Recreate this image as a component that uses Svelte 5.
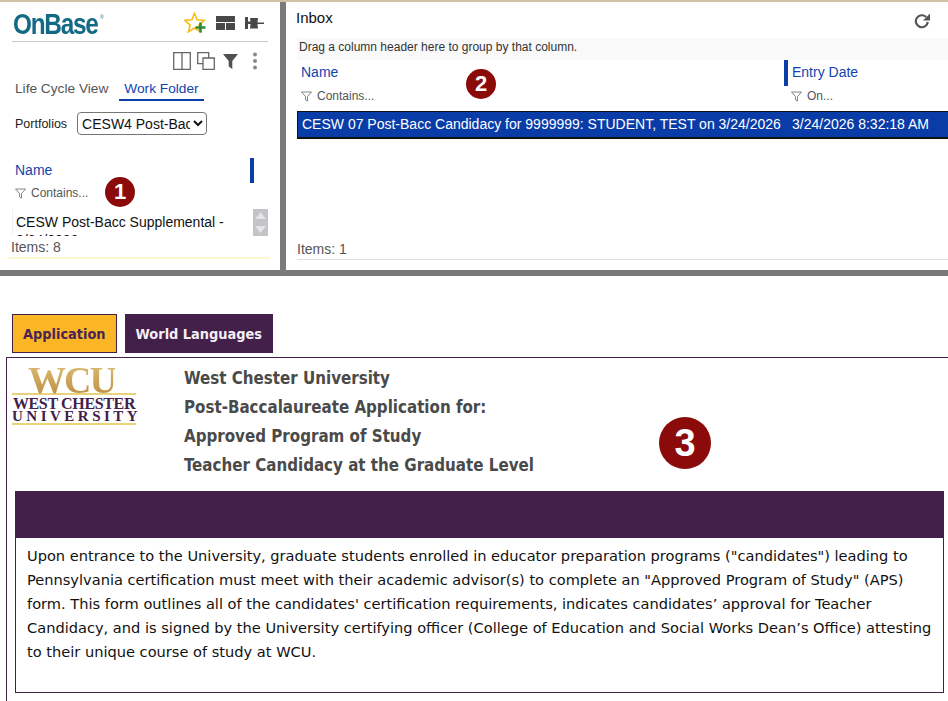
<script>
	const bodyLines = `Upon entrance to the University, graduate students enrolled in educator preparation programs ("candidates") leading to Pennsylvania certification must meet with their academic advisor(s) to complete an "Approved Program of Study" (APS) form. This form outlines all of the candidates' certification requirements, indicates candidates’ approval for Teacher Candidacy, and is signed by the University certifying officer (College of Education and Social Works Dean’s Office) attesting to their unique course of study at WCU.`;
</script>

<div class="page">
	<div class="top">
		<div class="left">
			<div class="brand">
				<span class="logo">OnBase<sup>®</sup></span>
				<div class="brand-icons">
					<svg width="22" height="21" viewBox="0 0 22 21">
						<path d="M10.500 1.500l2.700 6.300 7 .6-5.300 4.600 1.600 6.700-6-3.600-6 3.600 1.600-6.700L.8 8.400l7-.6z" fill="#fff" stroke="#f7bd1b" stroke-width="1.700"/>
						<path d="M16.500 10.500v10M11.500 15.500h10" stroke="#2c8a3c" stroke-width="2.600"/>
					</svg>
					<svg width="19" height="14" viewBox="0 0 19 14"><path d="M0 0h19v6H0zM0 7h9v7H0zM10 7h9v7h-9z" fill="#484848"/></svg>
					<svg width="19" height="12" viewBox="0 0 19 12"><path d="M0 0h3v4.500h2.500L5 1h8l-.5 4.500H19v1.500h-6.500l.5 4.500H5l.5-4.500H3V12H0z" fill="#484848"/></svg>
				</div>
			</div>
			<div class="tools">
				<svg width="18" height="18" viewBox="0 0 18 18"><path d="M.7.700h16.600v16.600H.700zM9 .700v16.600" fill="none" stroke="#666" stroke-width="1.300"/></svg>
				<svg width="18" height="18" viewBox="0 0 18 18"><path d="M.7.700h11v11H.700z" fill="#fff" stroke="#666" stroke-width="1.300"/><path d="M6 6h11.300v11.300H6z" fill="#fff" stroke="#666" stroke-width="1.300"/></svg>
				<svg class="funnel" width="15" height="15" viewBox="0 0 15 15"><path d="M0 0h15L9.300 7v8l-3.600-2.500V7z" fill="#505050"/></svg>
				<svg class="dots" width="6" height="18" viewBox="0 0 6 18"><circle cx="3" cy="2.500" r="2" fill="#888"/><circle cx="3" cy="9" r="2" fill="#888"/><circle cx="3" cy="15.500" r="2" fill="#888"/></svg>
			</div>
			<div class="tabs">
				<span class="tab">Life Cycle View</span>
				<span class="tab active">Work Folder</span>
			</div>
			<div class="portfolios">
				<span>Portfolios</span>
				<select><option>CESW4 Post-Bac</option></select>
			</div>
			<div class="col-head">
				<span>Name</span>
				<i class="grip"></i>
			</div>
			<div class="filter">
				<svg width="11" height="11" viewBox="0 0 11 11"><path d="M.5 1h10L6.500 5.500V10l-2-1.200V5.500z" fill="none" stroke="#666" stroke-width=".8"/></svg>
				<span>Contains...</span>
			</div>
			<div class="list">
				<div class="list-text">CESW Post-Bacc Supplemental - 3/24/2026</div>
				<div class="scroll">
					<svg width="15" height="13" viewBox="0 0 15 13"><path d="M7.500 3l5.500 7H2z" fill="#e4e4e4"/></svg>
					<svg width="15" height="13" viewBox="0 0 15 13"><path d="M7.500 10L2 3h11z" fill="#e4e4e4"/></svg>
				</div>
			</div>
			<div class="items left-items">Items: 8</div>
		</div>
		<div class="splitter"></div>
		<div class="right">
			<div class="inbox-title">
				<span>Inbox</span>
				<svg width="16" height="16" viewBox="0 0 16 16"><path d="M13.800 9a6 6 0 1 1-1.700-5" fill="none" stroke="#555" stroke-width="2.200"/><path d="M16 .5V7.500H9z" fill="#555"/></svg>
			</div>
			<div class="group">Drag a column header here to group by that column.</div>
			<div class="grid-head">
				<div class="col-name">
					<div class="head-label">Name</div>
					<div class="filter">
						<svg width="11" height="11" viewBox="0 0 11 11"><path d="M.5 1h10L6.500 5.500V10l-2-1.200V5.500z" fill="none" stroke="#666" stroke-width=".8"/></svg>
						<span>Contains...</span>
					</div>
				</div>
				<div class="col-date">
					<div class="head-label date">Entry Date</div>
					<div class="filter">
						<svg width="11" height="11" viewBox="0 0 11 11"><path d="M.5 1h10L6.500 5.500V10l-2-1.200V5.500z" fill="none" stroke="#666" stroke-width=".8"/></svg>
						<span>On...</span>
					</div>
				</div>
			</div>
			<div class="row">
				<span class="row-name">CESW 07 Post-Bacc Candidacy for 9999999: STUDENT, TEST on 3/24/2026</span>
				<span>3/24/2026 8:32:18 AM</span>
			</div>
			<div class="spacer"></div>
			<div class="items right-items">Items: 1</div>
		</div>
	</div>
	<div class="bar"></div>

	<div class="form-tabs">
		<button class="ftab on">Application</button>
		<button class="ftab">World Languages</button>
	</div>
	<div class="form">
		<div class="form-head">
			<div class="wcu">
				<div class="wcu-mark"><span>WCU</span></div>
				<div class="wcu-west">WEST CHESTER</div>
				<div class="wcu-uni">UNIVERSITY</div>
			</div>
			<div class="titles">
				<div>West Chester University</div>
				<div>Post-Baccalaureate Application for:</div>
				<div>Approved Program of Study</div>
				<div>Teacher Candidacy at the Graduate Level</div>
			</div>
		</div>
		<div class="section">
			<div class="section-bar"></div>
			<p>{bodyLines}</p>
		</div>
	</div>

	<span class="badge b1">1</span>
	<span class="badge b2">2</span>
	<span class="badge b3">3</span>
</div>

<style>
	:global(body) {
		margin: 0;
		background: #fff;
		font-family: "Liberation Sans", Arial, sans-serif;
	}

	.page {
		position: relative;
		width: 948px;
		height: 701px;
		overflow: hidden;
	}

	.top {
		display: flex;
		height: 268px;
		border-top: 2px solid #d3bfa5;
	}

	.left {
		box-sizing: border-box;
		width: 280px;
		padding: 0 12px;
		font-size: 14px;
	}

	.splitter {
		width: 6px;
		background: #7a7a7a;
	}

	.bar {
		height: 6px;
		background: #7a7a7a;
	}

	.brand {
		display: flex;
		justify-content: space-between;
		align-items: center;
		height: 39px;
		border-bottom: 1px solid #c8c8c8;
	}

	.logo {
		margin: 5px 0 0 1px;
		font-size: 29px;
		font-weight: 700;
		letter-spacing: -1.500px;
		color: #136a85;
		transform: scaleX(.84);
		transform-origin: left;
	}

	.logo sup {
		margin-left: 3px;
		font-size: 6px;
		font-weight: 400;
		line-height: 0;
		vertical-align: 15px;
	}

	.brand-icons {
		display: flex;
		align-items: center;
		gap: 10px;
		margin: 2px 4px 0 0;
	}

	.tools {
		box-sizing: border-box;
		display: flex;
		justify-content: flex-end;
		align-items: center;
		gap: 6px;
		height: 34px;
		padding-top: 4px;
	}

	.funnel {
		margin-left: 2px;
	}

	.dots {
		margin: 0 10px 0 8px;
	}

	.tabs {
		display: flex;
		gap: 8px;
		margin-top: 2px;
		font-size: 13.700px;
	}

	.tab {
		padding: 3px 3px 2px;
		line-height: 16px;
		color: #555;
		border-bottom: 2px solid transparent;
	}

	.tab.active {
		padding: 3px 5px 2px;
		color: #1144b0;
		border-bottom-color: #0a3fa8;
	}

	.portfolios {
		display: flex;
		align-items: center;
		gap: 10px;
		margin: 11px 0 0 3px;
		font-size: 12.500px;
		color: #222;
	}

	select {
		width: 130px;
		height: 23px;
		font-family: "Liberation Sans", Arial, sans-serif;
		font-size: 14px;
		color: #111;
		background: #fff;
		border: 1px solid #767676;
		border-radius: 4px;
	}

	.col-head {
		display: flex;
		justify-content: space-between;
		align-items: center;
		height: 25px;
		margin: 23px 14px 0 3px;
		color: #1144b0;
	}

	.col-head span {
		padding-bottom: 1px;
	}

	.grip {
		width: 4px;
		height: 25px;
		background: #0a3fa8;
	}

	.filter {
		display: flex;
		align-items: center;
		gap: 5px;
		height: 20px;
		margin-left: 3px;
		font-size: 12px;
		color: #555;
	}

	.list {
		display: flex;
		height: 27px;
		margin-top: 6px;
		overflow: hidden;
		border-left: 1px solid #f0f0f0;
	}

	.list-text {
		box-sizing: border-box;
		width: 243px;
		padding: 4px 0 0 3px;
		font-size: 14px;
		line-height: 18px;
		color: #111;
	}

	.scroll {
		display: flex;
		flex-direction: column;
		justify-content: center;
		gap: 1px;
		width: 15px;
		height: 27px;
		background: #c4c4c8;
	}

	.items {
		font-size: 14px;
		color: #555;
	}

	.left-items {
		height: 20px;
		margin: 1px -2px 0 -4px;
		padding-left: 3px;
		line-height: 20px;
		border-bottom: 2px solid #fdf8d0;
	}

	.right {
		flex: 1;
		min-width: 0;
		display: flex;
		flex-direction: column;
		padding-left: 11px;
		overflow: hidden;
	}

	.inbox-title {
		box-sizing: border-box;
		display: flex;
		justify-content: space-between;
		height: 36px;
		padding: 7px 18px 0 0;
		font-size: 15px;
		line-height: 18px;
		color: #111;
	}

	.inbox-title span {
		margin-left: -1px;
	}

	.inbox-title svg {
		margin-top: 4px;
	}

	.group {
		height: 22px;
		padding-left: 2px;
		line-height: 18px;
		background: #f9f9f9;
		font-size: 12px;
		color: #333;
	}

	.grid-head {
		display: flex;
		height: 51px;
	}

	.col-name {
		width: 487px;
	}

	.head-label {
		height: 26px;
		padding-left: 4px;
		line-height: 24px;
		font-size: 14px;
		color: #1144b0;
	}

	.head-label.date {
		border-left: 4px solid #0a3fa8;
	}

	.col-name .filter {
		margin-left: 4px;
	}

	.col-date .filter {
		margin-left: 7px;
	}

	.row {
		box-sizing: border-box;
		display: flex;
		align-items: center;
		height: 28px;
		padding: 0 0 1px 4px;
		background: #0a3ca8;
		border: solid #111;
		border-width: 1px 0 2px 1px;
		color: #fff;
		font-size: 14px;
		white-space: nowrap;
	}

	.row-name {
		width: 490px;
	}

	.spacer {
		flex: 1;
	}

	.right-items {
		height: 20px;
		margin-bottom: 10px;
		line-height: 20px;
		border-bottom: 1px solid #ddd;
	}

	.form-tabs {
		display: flex;
		gap: 8px;
		margin: 38px 0 0 12px;
	}

	.ftab {
		height: 39px;
		padding: 0 10px;
		border: 1px solid #42204a;
		background: #42204a;
		color: #f4eef6;
		font-family: "DejaVu Sans", Verdana, sans-serif;
		font-stretch: condensed;
		font-size: 14.400px;
		font-weight: 700;
	}

	.ftab.on {
		background: #fbb625;
		color: #4a2355;
	}

	.form {
		box-sizing: border-box;
		height: 344px;
		margin: 4px 0 0 6px;
		padding: 0 4px 0 8px;
		border: 1px solid #42204a;
		border-width: 1px 0 0 1px;
	}

	.form-head {
		display: flex;
		height: 133px;
	}

	.wcu {
		width: 124px;
		margin: 6px 0 0 -3px;
		text-align: center;
		font-family: "Liberation Serif", "Times New Roman", serif;
		font-weight: 700;
		color: #42204a;
	}

	.wcu-mark {
		height: 29px;
		padding-right: 5px;
		border-bottom: 2px solid #e8d27a;
		line-height: 32px;
		font-size: 38px;
		letter-spacing: -2px;
	}

	.wcu-mark span {
		background: linear-gradient(#e0c27a, #b8893c);
		-webkit-background-clip: text;
		background-clip: text;
		color: transparent;
	}

	.wcu-west {
		margin-top: 3px;
		font-size: 16px;
		line-height: 12px;
		letter-spacing: -.350px;
		white-space: nowrap;
	}

	.wcu-uni {
		margin-top: 0;
		padding-bottom: 1px;
		border-bottom: 2px solid #e8d27a;
		font-size: 15px;
		line-height: 12px;
		letter-spacing: 3.500px;
		white-space: nowrap;
	}

	.titles {
		margin: 6px 0 0 48px;
		font-family: "DejaVu Sans", Verdana, sans-serif;
		font-stretch: condensed;
		font-size: 16.800px;
		font-weight: 700;
		line-height: 29px;
		color: #4a4a4a;
		white-space: nowrap;
	}

	.section {
		box-sizing: border-box;
		height: 202px;
		border: 1px solid #42204a;
	}

	.section-bar {
		height: 46px;
		background: #42204a;
	}

	p {
		margin: 6px 4px 0 11px;
		font-family: "DejaVu Sans", Verdana, sans-serif;
		font-size: 14.600px;
		line-height: 24px;
		color: #111;
	}

	.badge {
		position: absolute;
		display: flex;
		align-items: center;
		justify-content: center;
		width: 30px;
		height: 30px;
		border-radius: 50%;
		background: #8b0a0a;
		color: #fff;
		font-weight: 700;
		font-size: 22px;
	}

	.b1 { left: 105px; top: 177px; }
	.b2 { left: 466px; top: 69px; }
	.b3 {
		left: 659px;
		top: 417px;
		width: 52px;
		height: 52px;
		font-size: 38px;
	}
</style>
